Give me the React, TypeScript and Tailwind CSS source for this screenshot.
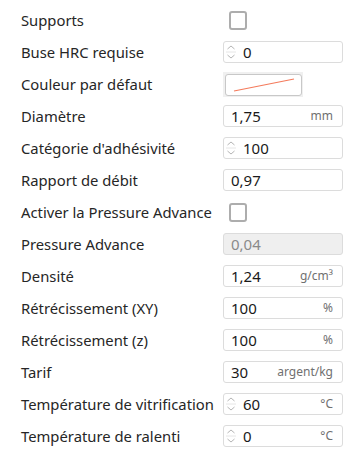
type Row =
  | { label: string; kind: "check" }
  | { label: string; kind: "color" }
  | { label: string; kind: "input"; value: string; unit?: string; spin?: boolean; disabled?: boolean };

const rows: Row[] = [
  { label: "Supports", kind: "check" },
  { label: "Buse HRC requise", kind: "input", value: "0", spin: true },
  { label: "Couleur par défaut", kind: "color" },
  { label: "Diamètre", kind: "input", value: "1,75", unit: "mm" },
  { label: "Catégorie d'adhésivité", kind: "input", value: "100", spin: true },
  { label: "Rapport de débit", kind: "input", value: "0,97" },
  { label: "Activer la Pressure Advance", kind: "check" },
  { label: "Pressure Advance", kind: "input", value: "0,04", disabled: true },
  { label: "Densité", kind: "input", value: "1,24", unit: "g/cm³" },
  { label: "Rétrécissement (XY)", kind: "input", value: "100", unit: "%" },
  { label: "Rétrécissement (z)", kind: "input", value: "100", unit: "%" },
  { label: "Tarif", kind: "input", value: "30", unit: "argent/kg" },
  { label: "Température de vitrification", kind: "input", value: "60", unit: "°C", spin: true },
  { label: "Température de ralenti", kind: "input", value: "0", unit: "°C", spin: true },
];

const Spinner = () => (
  <svg width="10" height="18" viewBox="0 0 10 18" className="shrink-0">
    <path d="M1.5 6 L5 3 L8.5 6" fill="none" stroke="#b5b5b5" strokeWidth="1" />
    <line x1="0" y1="9" x2="10" y2="9" stroke="#e6e6e6" strokeWidth="1" />
    <path d="M1.5 12 L5 15 L8.5 12" fill="none" stroke="#b5b5b5" strokeWidth="1" />
  </svg>
);

const Field = ({ row }: { row: Row }) => {
  if (row.kind === "check") {
    return (
      <div className="ml-[6px] w-[18px] h-[19px] rounded-[3px] border-2 border-[#adadad] bg-white" />
    );
  }
  if (row.kind === "color") {
    return (
      <div className="w-[80px] h-[25px] bg-[#f0f0f0] pl-[2px] pt-[2px] pr-[1px] pb-[1px]">
        <div className="w-full h-full bg-white border border-[#c8c8c8] rounded-[3px] flex items-center justify-center">
          <svg width="64" height="16" viewBox="0 0 64 16">
            <line x1="2" y1="14" x2="62" y2="2" stroke="#f47b5c" strokeWidth="1.2" />
          </svg>
        </div>
      </div>
    );
  }
  return (
    <div
      className={`w-[120px] h-[22px] rounded-[3px] border border-[#dcdcdc] flex items-center ${
        row.disabled ? "bg-[#efefef]" : "bg-white"
      } ${row.spin ? "pl-[2px]" : "pl-[7px]"} pr-[9px]`}
    >
      {row.spin && <Spinner />}
      <span
        className={`text-[15px] leading-none ${row.spin ? "ml-[7px] text-[14px]" : ""} ${
          row.disabled ? "text-[#8a8a8a]" : "text-[#1a1a1a]"
        }`}
      >
        {row.value}
      </span>
      {row.unit && <span className="ml-auto text-[12px] text-[#707070] leading-none">{row.unit}</span>}
    </div>
  );
};

export default function App() {
  return (
    <div
      className="w-[363px] h-[459px] bg-white pt-[4px]"
      style={{ fontFamily: '"Noto Sans", "Liberation Sans", sans-serif' }}
    >
      {rows.map((row, i) => (
        <div key={i} className="flex items-center h-[32px]">
          <div className="w-[223px] pl-[21px] text-[14.8px] text-[#262626] whitespace-nowrap">{row.label}</div>
          <Field row={row} />
        </div>
      ))}
    </div>
  );
}
